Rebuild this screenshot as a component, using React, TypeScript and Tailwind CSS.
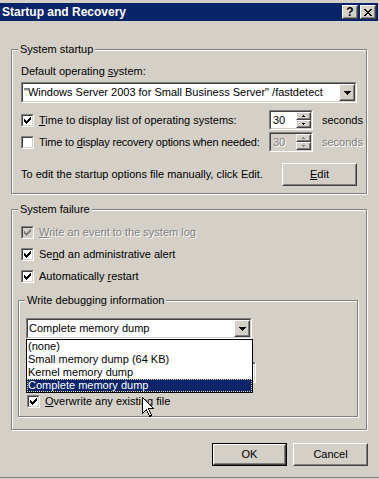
import React from 'react';

const CHECK = ['......#', '.....##', '#...###', '##.###.', '#####..', '.###...', '..#....'];
const COMBO_ARROW = ['#######', '.#####.', '..###..', '...#...'];
const UP = ['.#.', '###'];
const DOWN = ['###', '.#.'];
const CLOSE = ['##....##', '.##..##.', '..####..', '...##...', '..####..', '.##..##.', '##....##'];

function Pixels({ rows, color }: { rows: string[]; color: string }) {
  const w = rows[0].length;
  const h = rows.length;
  return (
    <svg width={w} height={h} viewBox={`0 0 ${w} ${h}`} shapeRendering="crispEdges" className="block">
      {rows.flatMap((row, y) =>
        row.split('').map((c, x) => (c === '#' ? <rect key={`${x}-${y}`} x={x} y={y} width={1} height={1} fill={color} /> : null)),
      )}
    </svg>
  );
}

function Sunken({ className = '', inner = 'bg-white', children }: { className?: string; inner?: string; children?: React.ReactNode }) {
  return (
    <div className={`border border-t-[#808080] border-l-[#808080] border-r-white border-b-white ${className}`}>
      <div className={`h-full w-full border border-t-[#404040] border-l-[#404040] border-r-[#d4d0c8] border-b-[#d4d0c8] ${inner}`}>
        {children}
      </div>
    </div>
  );
}

function Raised({ className = '', children }: { className?: string; children?: React.ReactNode }) {
  return (
    <div className={`border border-t-white border-l-white border-r-[#404040] border-b-[#404040] ${className}`}>
      <div className="flex h-full w-full items-center justify-center border border-t-[#d4d0c8] border-l-[#d4d0c8] border-r-[#808080] border-b-[#808080] bg-[#d4d0c8]">
        {children}
      </div>
    </div>
  );
}

function Checkbox({ checked, disabled }: { checked?: boolean; disabled?: boolean }) {
  return (
    <Sunken className="h-[13px] w-[13px] shrink-0" inner={disabled ? 'bg-[#d4d0c8]' : 'bg-white'}>
      {checked && (
        <div className="pl-[1px] pt-[1px]">
          <Pixels rows={CHECK} color={disabled ? '#808080' : '#000000'} />
        </div>
      )}
    </Sunken>
  );
}

function Group({ label, className = '', children }: { label: string; className?: string; children?: React.ReactNode }) {
  return (
    <div className={`relative border border-[#808080] shadow-[inset_1px_1px_0_#ffffff,1px_1px_0_#ffffff] ${className}`}>
      <span className="absolute -top-[7px] left-[6px] bg-[#d4d0c8] px-[2px] leading-[13px] whitespace-nowrap">{label}</span>
      {children}
    </div>
  );
}

function Spinner({ disabled }: { disabled?: boolean }) {
  return (
    <Sunken className="h-[20px] w-[44px] shrink-0" inner={disabled ? 'bg-[#d4d0c8] flex' : 'bg-white flex'}>
      <span
        className={`flex-1 pl-[2px] leading-[16px] ${disabled ? 'text-[#808080] [text-shadow:1px_1px_0_#ffffff]' : ''}`}
      >
        30
      </span>
      <div className="flex w-[15px] flex-col">
        <Raised className="h-[8px] w-full">
          <Pixels rows={UP} color={disabled ? '#808080' : '#000000'} />
        </Raised>
        <Raised className="h-[8px] w-full">
          <Pixels rows={DOWN} color={disabled ? '#808080' : '#000000'} />
        </Raised>
      </div>
    </Sunken>
  );
}

function ComboBox({ value, className = '' }: { value: string; className?: string }) {
  return (
    <Sunken className={`h-[21px] ${className}`} inner="bg-white flex items-center">
      <span className="flex-1 truncate whitespace-nowrap pl-[1px] leading-[17px]">{value}</span>
      <Raised className="h-full w-[16px] shrink-0">
        <Pixels rows={COMBO_ARROW} color="#000000" />
      </Raised>
    </Sunken>
  );
}

const u = 'underline decoration-1 underline-offset-[1px]';
const dim = 'text-[#808080] [text-shadow:1px_1px_0_#ffffff]';

export default function App() {
  return (
    <div className="relative flex h-[479px] w-[379px] flex-col overflow-hidden bg-[#d4d0c8] font-['Liberation_Sans',Arial,sans-serif] text-[11px] leading-[13px] text-black">
      {/* title bar */}
      <div className="mt-[3px] flex h-[18px] w-[378px] items-center bg-[#0a246a] pl-[2px] pr-[2px]">
        <span className="text-[12px] font-bold leading-[18px] text-white">Startup and Recovery</span>
        <div className="ml-auto flex gap-[2px]">
          <Raised className="h-[14px] w-[16px]">
            <span className="text-[12px] font-bold leading-[12px]">?</span>
          </Raised>
          <Raised className="h-[14px] w-[16px]">
            <Pixels rows={CLOSE} color="#000000" />
          </Raised>
        </div>
      </div>

      {/* System startup */}
      <Group label="System startup" className="ml-[11px] mt-[28px] h-[145px] w-[356px] px-[9px] pt-[15px]">
        <div className="whitespace-nowrap">
          Default operating <span className={u}>s</span>ystem:
        </div>
        <ComboBox className="mt-[4px] w-[336px]" value={'"Windows Server 2003 for Small Business Server" /fastdetect'} />

        <div className="mt-[7px] flex h-[20px] items-center whitespace-nowrap">
          <div className="flex w-[248px] min-w-0 shrink-0 items-center gap-[5px]">
            <Checkbox checked />
            <span>
              <span className={u}>T</span>ime to display list of operating systems:
            </span>
          </div>
          <Spinner />
          <span className="ml-[9px]">seconds</span>
        </div>

        <div className="mt-[2px] flex h-[20px] items-center whitespace-nowrap">
          <div className="flex w-[248px] min-w-0 shrink-0 items-center gap-[5px]">
            <Checkbox />
            <span className="tracking-[-0.2px]">
              Time to <span className={u}>d</span>isplay recovery options when needed:
            </span>
          </div>
          <Spinner disabled />
          <span className={`ml-[9px] ${dim}`}>seconds</span>
        </div>

        <div className="mt-[11px] flex h-[23px] items-center">
          <span className="flex-1 whitespace-nowrap">To edit the startup options file manually, click Edit.</span>
          <Raised className="h-[23px] w-[75px]">
            <span>
              <span className={u}>E</span>dit
            </span>
          </Raised>
        </div>
      </Group>

      {/* System failure */}
      <Group label="System failure" className="ml-[11px] mt-[15px] h-[221px] w-[356px] pl-[6px] pt-[16px]">
        <div className="flex h-[13px] items-center gap-[5px] pl-[3px] whitespace-nowrap">
          <Checkbox checked disabled />
          <span className={dim}>
            <span className={u}>W</span>rite an event to the system log
          </span>
        </div>
        <div className="mt-[9px] flex h-[13px] items-center gap-[5px] pl-[3px] whitespace-nowrap">
          <Checkbox checked />
          <span>
            Se<span className={u}>n</span>d an administrative alert
          </span>
        </div>
        <div className="mt-[9px] flex h-[13px] items-center gap-[5px] pl-[3px] whitespace-nowrap">
          <Checkbox checked />
          <span>
            Automatically <span className={u}>r</span>estart
          </span>
        </div>

        <Group label="Write debugging information" className="mt-[17px] h-[117px] w-[340px] pl-[7px] pt-[17px]">
          <ComboBox className="w-[226px]" value="Complete memory dump" />
          <Sunken className="mt-[23px] h-[21px] w-[230px]" />
          <div className="ml-[1px] mt-[12px] flex h-[13px] items-center gap-[5px] whitespace-nowrap">
            <Checkbox checked />
            <span>
              <span className={u}>O</span>verwrite any existing file
            </span>
          </div>
        </Group>
      </Group>

      {/* dialog buttons */}
      <div className="mt-[13px] flex justify-end gap-[6px] pr-[11px]">
        <div className="h-[23px] w-[75px] border border-black">
          <Raised className="h-full w-full">OK</Raised>
        </div>
        <Raised className="h-[23px] w-[75px]">Cancel</Raised>
      </div>

      <div className="mb-[1px] mt-auto h-[1px] bg-[#808080]" />

      {/* open dropdown list */}
      <div className="absolute left-[26px] top-[339px] w-[227px] border border-black bg-white">
        <div className="h-[13px] pl-[1px] leading-[13px]">(none)</div>
        <div className="h-[13px] pl-[1px] leading-[13px]">Small memory dump (64 KB)</div>
        <div className="h-[13px] pl-[1px] leading-[13px]">Kernel memory dump</div>
        <div className="h-[13px] border border-dotted border-[#e8dca0] bg-[#0a246a] leading-[11px] text-white">Complete memory dump</div>
      </div>

      {/* mouse pointer */}
      <svg className="absolute left-[142px] top-[397px]" width="13" height="21" viewBox="0 0 13 21" shapeRendering="crispEdges">
        <path d="M0.5 0.5 L0.5 16.5 L4.5 12.5 L7.5 19.5 L9.5 18.5 L6.5 11.5 L11.5 11.5 Z" fill="#ffffff" stroke="#000000" strokeWidth="1" />
      </svg>
    </div>
  );
}
